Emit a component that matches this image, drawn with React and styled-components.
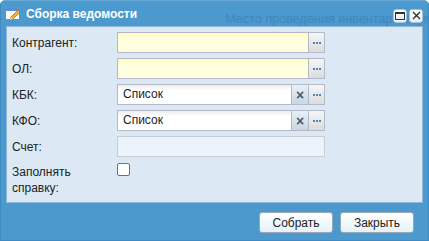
import styled, { createGlobalStyle } from "styled-components";

const GlobalStyle = createGlobalStyle`
  html, body {
    margin: 0;
    padding: 0;
    background: #ffffff;
  }
  body {
    font-family: "Liberation Sans", Arial, sans-serif;
    font-size: 12px;
    color: #222;
  }
`;

const Window = styled.div`
  position: relative;
  width: 429px;
  height: 241px;
  box-sizing: border-box;
  background: #4b99cd;
  border-radius: 5px 5px 0 0;
  border: 1px solid #3f8ac1;
  border-top-color: #67aad8;
  display: flex;
  flex-direction: column;
  overflow: hidden;
`;

const Header = styled.div`
  position: relative;
  height: 25px;
  display: flex;
  align-items: center;
  padding: 0 5px 0 4px;
  gap: 5px;
`;

// faint caption of a window lying behind this one
const Ghost = styled.div`
  position: absolute;
  left: 224px;
  top: 10px;
  font-size: 13px;
  letter-spacing: -0.2px;
  line-height: 16px;
  color: #3f87bf;
  white-space: nowrap;
  pointer-events: none;
`;

const Title = styled.div`
  position: relative;
  font-weight: bold;
  color: #ffffff;
  font-size: 12px;
  flex: 1;
`;

const Tools = styled.div`
  position: relative;
  display: flex;
  gap: 2px;
  margin-top: 4px;
`;

const Tool = styled.div`
  width: 14px;
  height: 14px;
  box-sizing: border-box;
  background: linear-gradient(#ffffff, #e8eef4);
  border: 1px solid #a9c2d6;
  border-radius: 3px;
  display: flex;
  align-items: center;
  justify-content: center;
`;

const Body = styled.div`
  position: relative;
  margin: 0 5px;
  height: 177px;
  box-sizing: border-box;
  background: #dce9f4;
  border: 1px solid #8fb7d8;
  padding: 5px 0 0 5px;
  display: flex;
  flex-direction: column;
  gap: 5px;
`;

const Row = styled.div`
  display: flex;
  align-items: ${({ $top }) => ($top ? "flex-start" : "center")};
  min-height: 21px;
`;

const Label = styled.div`
  width: 105px;
  line-height: 16px;
  padding-top: ${({ $top }) => ($top ? "2px" : "0")};
  color: #222;
`;

const Field = styled.div`
  display: flex;
  width: 208px;
  height: 21px;
`;

const Input = styled.div`
  flex: 1;
  box-sizing: border-box;
  height: 21px;
  border: 1px solid #b5b8c8;
  border-right: none;
  padding: 0 5px;
  line-height: 19px;
  background: ${({ $kind }) =>
    $kind === "required"
      ? "linear-gradient(#fffcb8, #ffffe0 6px, #ffffe0)"
      : $kind === "disabled"
      ? "linear-gradient(#e9f1f9, #eef4fb)"
      : "linear-gradient(#ededed, #ffffff 5px)"};
  ${({ $kind }) =>
    $kind === "disabled" && "border-color: #c8ccd4; border-right: 1px solid #c8ccd4;"}
`;

const Trigger = styled.div`
  width: 17px;
  height: 21px;
  box-sizing: border-box;
  border: 1px solid #b5b8c8;
  background: linear-gradient(#f6f6f6, #dcdcdc);
  display: flex;
  align-items: center;
  justify-content: center;
  gap: 1px;
`;

const Clear = styled(Trigger)`
  border-right: none;
  background: linear-gradient(#e6f1f8, #c6d8e4);
  color: #556;
  font-size: 14px;
  font-weight: bold;
`;

const Dot = styled.span`
  width: 2px;
  height: 2px;
  background: #4f86c2;
`;

const Check = styled.div`
  width: 13px;
  height: 13px;
  box-sizing: border-box;
  margin-top: 1px;
  border: 1px solid #6d7278;
  border-radius: 2px;
  background: #ffffff;
`;

const Footer = styled.div`
  display: flex;
  justify-content: flex-end;
  gap: 7px;
  padding: 9px 14px 0 0;
`;

const Button = styled.div`
  width: 74px;
  height: 21px;
  box-sizing: border-box;
  border: 1px solid #9aa8b8;
  border-radius: 3px;
  background: linear-gradient(#ffffff, #e4f2fb);
  display: flex;
  align-items: center;
  justify-content: center;
  color: #222;
`;

const Dots = () => (
  <>
    <Dot />
    <Dot />
    <Dot />
  </>
);

const TitleIcon = () => (
  <svg width="16" height="16" viewBox="0 0 16 16">
    <rect x="0.5" y="1.5" width="14" height="12" fill="#ffffff" stroke="#6e8fb5" />
    <rect x="1" y="2" width="13" height="3" fill="#5a8fd0" />
    <path d="M5 14 L6 11 L13 4 L15 6 L8 13 Z" fill="#f2b13a" stroke="#b06f1a" strokeWidth="0.8" />
    <path d="M5 14 L6 11 L8 13 Z" fill="#f4d9a8" />
  </svg>
);

const MaxIcon = () => (
  <svg width="10" height="8" viewBox="0 0 10 8">
    <rect x="0.5" y="0.5" width="9" height="7" fill="none" stroke="#333" />
    <rect x="0" y="0" width="10" height="2" fill="#333" />
  </svg>
);

const CloseIcon = () => (
  <svg width="9" height="9" viewBox="0 0 9 9">
    <path d="M1 1 L8 8 M8 1 L1 8" stroke="#333" strokeWidth="1.4" />
  </svg>
);

export default function App() {
  return (
    <>
      <GlobalStyle />
      <Window>
        <Header>
          <Ghost>Место проведения инвентаризации</Ghost>
          <TitleIcon />
          <Title>Сборка ведомости</Title>
          <Tools>
            <Tool>
              <MaxIcon />
            </Tool>
            <Tool>
              <CloseIcon />
            </Tool>
          </Tools>
        </Header>
        <Body>
          <Row>
            <Label>Контрагент:</Label>
            <Field>
              <Input $kind="required" />
              <Trigger>
                <Dots />
              </Trigger>
            </Field>
          </Row>
          <Row>
            <Label>ОЛ:</Label>
            <Field>
              <Input $kind="required" />
              <Trigger>
                <Dots />
              </Trigger>
            </Field>
          </Row>
          <Row>
            <Label>КБК:</Label>
            <Field>
              <Input>Список</Input>
              <Clear>×</Clear>
              <Trigger>
                <Dots />
              </Trigger>
            </Field>
          </Row>
          <Row>
            <Label>КФО:</Label>
            <Field>
              <Input>Список</Input>
              <Clear>×</Clear>
              <Trigger>
                <Dots />
              </Trigger>
            </Field>
          </Row>
          <Row>
            <Label>Счет:</Label>
            <Field>
              <Input $kind="disabled" />
            </Field>
          </Row>
          <Row $top>
            <Label $top>
              Заполнять
              <br />
              справку:
            </Label>
            <Check />
          </Row>
        </Body>
        <Footer>
          <Button>Собрать</Button>
          <Button>Закрыть</Button>
        </Footer>
      </Window>
    </>
  );
}
